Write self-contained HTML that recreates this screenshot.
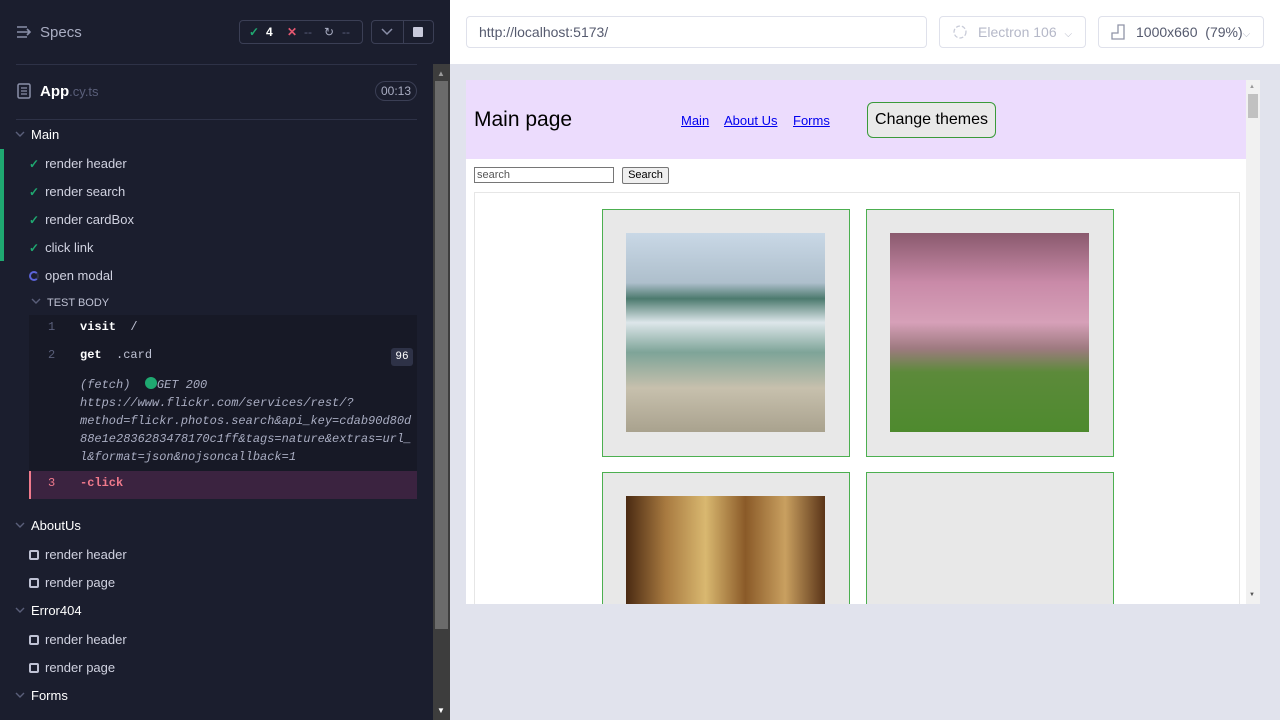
<!DOCTYPE html>
<html><head><meta charset="utf-8"><style>
*{margin:0;padding:0;box-sizing:border-box}
body{width:1280px;height:720px;overflow:hidden;font-family:"Liberation Sans",sans-serif;background:#e1e3ed;position:relative}
.a{position:absolute}
#left{left:0;top:0;width:450px;height:720px;background:#1b1e2e;color:#d0d2e0;font-size:13px}
.row{position:absolute;left:0;height:28px;line-height:28px}
.ck{color:#1fa971;font-weight:bold;font-size:12px}
.sq{display:inline-block;width:10px;height:10px;border:2px solid #bfc2d4;border-radius:2px;vertical-align:-1px}
.mono{font-family:"Liberation Mono",monospace;font-size:12px}
.chev{display:inline-block;width:10px;height:6px;vertical-align:2px}
</style></head><body>
<div id="left" class="a">
 <div class="a" style="left:16px;top:25px;width:16px;height:14px">
  <svg width="16" height="14"><path d="M1 2h10M1 7h13M1 12h10M11 4l3 3-3 3" stroke="#8a8fa8" stroke-width="1.6" fill="none"/></svg></div>
 <div class="a" style="left:40px;top:24px;font-size:15px;color:#a9adc2">Specs</div>
 <div class="a" style="left:239px;top:20px;width:124px;height:24px;border:1px solid #3b3f55;border-radius:4px;font-size:12px;line-height:22px">
  <span class="a ck" style="left:9px">✓</span><span class="a" style="left:26px;color:#fff;font-weight:bold">4</span>
  <span class="a" style="left:47px;color:#e45770;font-weight:bold">✕</span><span class="a" style="left:64px;color:#5a5f7a">--</span>
  <span class="a" style="left:84px;color:#a9adc2">↻</span><span class="a" style="left:102px;color:#5a5f7a">--</span></div>
 <div class="a" style="left:371px;top:20px;width:63px;height:24px;border:1px solid #3b3f55;border-radius:4px">
  <div class="a" style="left:31px;top:0;width:1px;height:22px;background:#3b3f55"></div>
  <svg class="a" style="left:9px;top:7px" width="12" height="8"><path d="M1 1l5 5 5-5" stroke="#8a8fa8" stroke-width="1.5" fill="none"/></svg>
  <div class="a" style="left:41px;top:6px;width:10px;height:10px;background:#c8cadb;border-radius:1px"></div></div>
 <div class="a" style="left:16px;top:64px;width:401px;height:1px;background:#2e3247"></div>
 <svg class="a" style="left:17px;top:83px" width="14" height="16"><rect x="1" y="1" width="12" height="14" rx="1.5" stroke="#8a8fa8" stroke-width="1.5" fill="none"/><path d="M4 5h6M4 8h6M4 11h6" stroke="#8a8fa8" stroke-width="1.3"/></svg>
 <div class="a" style="left:40px;top:83px;font-size:15px;color:#fff;font-weight:bold">App<span style="font-weight:normal;color:#5a5f7a;font-size:13px">.cy.ts</span></div>
 <div class="a" style="left:375px;top:81px;width:42px;height:20px;border:1px solid #3b3f55;border-radius:10px;font-size:12px;color:#a9adc2;text-align:center;line-height:18px">00:13</div>
 <div class="a" style="left:16px;top:119px;width:401px;height:1px;background:#2e3247"></div>
 <div class="a" style="left:0;top:149px;width:4px;height:112px;background:#1fa971"></div>
 <div class="row" style="top:121px;left:15px"><svg class="chev" viewBox="0 0 10 6"><path d="M1 1l4 4 4-4" stroke="#5a5f7a" stroke-width="1.4" fill="none"/></svg><span style="margin-left:6px;color:#fff">Main</span></div>
 <div class="row" style="top:150px;left:29px"><span class="ck">✓</span><span style="margin-left:6px">render header</span></div>
 <div class="row" style="top:178px;left:29px"><span class="ck">✓</span><span style="margin-left:6px">render search</span></div>
 <div class="row" style="top:206px;left:29px"><span class="ck">✓</span><span style="margin-left:6px">render cardBox</span></div>
 <div class="row" style="top:234px;left:29px"><span class="ck">✓</span><span style="margin-left:6px">click link</span></div>
 <div class="row" style="top:262px;left:29px"><span style="display:inline-block;width:10px;height:10px;border:2px solid #5b63d8;border-right-color:#2e3247;border-radius:50%;vertical-align:-1px"></span><span style="margin-left:6px">open modal</span></div>
 <div class="row" style="top:289px;left:31px;font-size:11px"><svg class="chev" viewBox="0 0 10 6"><path d="M1 1l4 4 4-4" stroke="#5a5f7a" stroke-width="1.4" fill="none"/></svg><span style="margin-left:6px;color:#bfc2d4">TEST BODY</span></div>
 <div class="a" style="left:29px;top:315px;width:388px;height:156px;background:#171926"></div>
 <div class="a mono" style="left:48px;top:320px;color:#5a5f7a">1</div>
 <div class="a mono" style="left:80px;top:320px;color:#fff;font-weight:bold">visit <span style="font-weight:normal;color:#bfc2d4">&nbsp;/</span></div>
 <div class="a mono" style="left:48px;top:348px;color:#5a5f7a">2</div>
 <div class="a mono" style="left:80px;top:348px;color:#fff;font-weight:bold">get <span style="font-weight:normal;color:#bfc2d4">&nbsp;.card</span></div>
 <div class="a mono" style="left:391px;top:348px;width:22px;height:18px;background:#2e3247;border-radius:3px;color:#fff;text-align:center;line-height:18px;font-size:11px">96</div>
 <div class="a mono" style="left:80px;top:376px;width:345px;color:#a9adc2;font-style:italic;font-size:12px;line-height:18px;white-space:nowrap">(fetch) &nbsp;<span style="display:inline-block;width:12px;height:12px;background:#1fa971;border-radius:50%;vertical-align:-1px"></span>GET 200<br>https://www.flickr.com/services/rest/?<br>method=flickr.photos.search&amp;api_key=cdab90d80d<br>88e1e2836283478170c1ff&amp;tags=nature&amp;extras=url_<br>l&amp;format=json&amp;nojsoncallback=1</div>
 <div class="a" style="left:29px;top:471px;width:388px;height:28px;background:#3b2340;border-left:2px solid #f07a8c"></div>
 <div class="a mono" style="left:48px;top:476px;color:#f07a8c">3</div>
 <div class="a mono" style="left:80px;top:476px;color:#f07a8c;font-weight:bold">-click</div>
 <div class="row" style="top:512px;left:15px"><svg class="chev" viewBox="0 0 10 6"><path d="M1 1l4 4 4-4" stroke="#5a5f7a" stroke-width="1.4" fill="none"/></svg><span style="margin-left:6px;color:#fff">AboutUs</span></div>
 <div class="row" style="top:541px;left:29px"><span class="sq"></span><span style="margin-left:6px">render header</span></div>
 <div class="row" style="top:569px;left:29px"><span class="sq"></span><span style="margin-left:6px">render page</span></div>
 <div class="row" style="top:597px;left:15px"><svg class="chev" viewBox="0 0 10 6"><path d="M1 1l4 4 4-4" stroke="#5a5f7a" stroke-width="1.4" fill="none"/></svg><span style="margin-left:6px;color:#fff">Error404</span></div>
 <div class="row" style="top:626px;left:29px"><span class="sq"></span><span style="margin-left:6px">render header</span></div>
 <div class="row" style="top:654px;left:29px"><span class="sq"></span><span style="margin-left:6px">render page</span></div>
 <div class="row" style="top:682px;left:15px"><svg class="chev" viewBox="0 0 10 6"><path d="M1 1l4 4 4-4" stroke="#5a5f7a" stroke-width="1.4" fill="none"/></svg><span style="margin-left:6px;color:#fff">Forms</span></div>
 <div class="a" style="left:433px;top:64px;width:17px;height:656px;background:#3d3d3d"></div>
 <div class="a" style="left:435px;top:81px;width:13px;height:548px;background:#6b6b6b"></div>
 <div class="a" style="left:437px;top:69px;color:#9a9a9a;font-size:8px">▲</div>
 <div class="a" style="left:437px;top:706px;color:#fff;font-size:8px">▼</div>
</div>
<div class="a" style="left:450px;top:0;width:830px;height:64px;background:#fff"></div>
<div class="a" style="left:466px;top:16px;width:461px;height:32px;border:1px solid #dfe1eb;border-radius:4px;font-size:14px;color:#555a6e;line-height:30px;padding-left:12px">http://localhost:5173/</div>
<div class="a" style="left:939px;top:16px;width:147px;height:32px;border:1px solid #dfe1eb;border-radius:4px;font-size:14px;color:#b5b8c8;line-height:30px;padding-left:38px">Electron 106 <span style="font-size:10px;margin-left:4px">⌵</span></div>
<svg class="a" style="left:952px;top:24px" width="16" height="16"><circle cx="8" cy="8" r="6" stroke="#c8cbd8" stroke-width="1.3" fill="none" stroke-dasharray="4 2"/></svg>
<div class="a" style="left:1098px;top:16px;width:166px;height:32px;border:1px solid #dfe1eb;border-radius:4px;font-size:14px;color:#555a6e;line-height:30px;padding-left:37px">1000x660 &nbsp;(79%)<span style="font-size:10px;color:#b5b8c8">⌵</span></div>
<svg class="a" style="left:1111px;top:24px" width="16" height="16"><path d="M1 15V9h6V1h6v14z" stroke="#9094a8" stroke-width="1.3" fill="none"/></svg>
<div class="a" style="left:466px;top:80px;width:794px;height:524px;background:#fff;overflow:hidden">
 <div class="a" style="left:0;top:0;width:780px;height:79px;background:#ecdcfd"></div>
 <div class="a" style="left:8px;top:28px;font-size:21px;color:#000">Main page</div>
 <div class="a" style="left:215px;top:33px;font-size:13px;color:#0000ee;text-decoration:underline">Main</div>
 <div class="a" style="left:258px;top:33px;font-size:13px;color:#0000ee;text-decoration:underline">About Us</div>
 <div class="a" style="left:327px;top:33px;font-size:13px;color:#0000ee;text-decoration:underline">Forms</div>
 <div class="a" style="left:401px;top:22px;width:129px;height:36px;border:1px solid #3a9a3a;border-radius:6px;background:#e9e9e9;font-size:16px;text-align:center;line-height:34px">Change themes</div>
 <div class="a" style="left:8px;top:87px;width:140px;height:16px;border:1px solid #767676;font-size:11px;color:#555;padding-left:2px;line-height:14px">search</div>
 <div class="a" style="left:156px;top:87px;width:47px;height:17px;border:1px solid #767676;border-radius:2px;background:#efefef;font-size:11px;text-align:center;line-height:15px">Search</div>
 <div class="a" style="left:8px;top:112px;width:766px;height:420px;border:1px solid #e6e6e6"></div>
 <div class="a" style="left:136px;top:129px;width:248px;height:248px;background:#e8e8e8;border:1px solid #4caf50"></div>
 <div class="a" style="left:160px;top:153px;width:199px;height:199px;background:linear-gradient(180deg,#c9d8e6 0%,#aebfcc 25%,#4c7a6e 33%,#dde6ea 45%,#7ea498 60%,#c7c0ad 78%,#a9a28e 100%)"></div>
 <div class="a" style="left:400px;top:129px;width:248px;height:248px;background:#e8e8e8;border:1px solid #4caf50"></div>
 <div class="a" style="left:424px;top:153px;width:199px;height:199px;background:linear-gradient(180deg,#8a5a6e 0%,#c98aa8 25%,#d6a0b8 45%,#9e7a80 58%,#5c8a3a 70%,#4e8a2e 100%)"></div>
 <div class="a" style="left:136px;top:392px;width:248px;height:248px;background:#e8e8e8;border:1px solid #4caf50"></div>
 <div class="a" style="left:160px;top:416px;width:199px;height:199px;background:linear-gradient(90deg,#4a2a12,#a87a40,#d9b870,#8a5a28,#c9a060,#5a3418)"></div>
 <div class="a" style="left:400px;top:392px;width:248px;height:248px;background:#e8e8e8;border:1px solid #4caf50"></div>
 <div class="a" style="left:780px;top:0;width:14px;height:524px;background:#f1f1f1"></div>
 <div class="a" style="left:782px;top:14px;width:10px;height:24px;background:#c1c1c1"></div>
 <div class="a" style="left:783px;top:4px;font-size:6px;color:#999">▲</div>
 <div class="a" style="left:783px;top:512px;font-size:6px;color:#555">▼</div>
</div>
</body></html>
